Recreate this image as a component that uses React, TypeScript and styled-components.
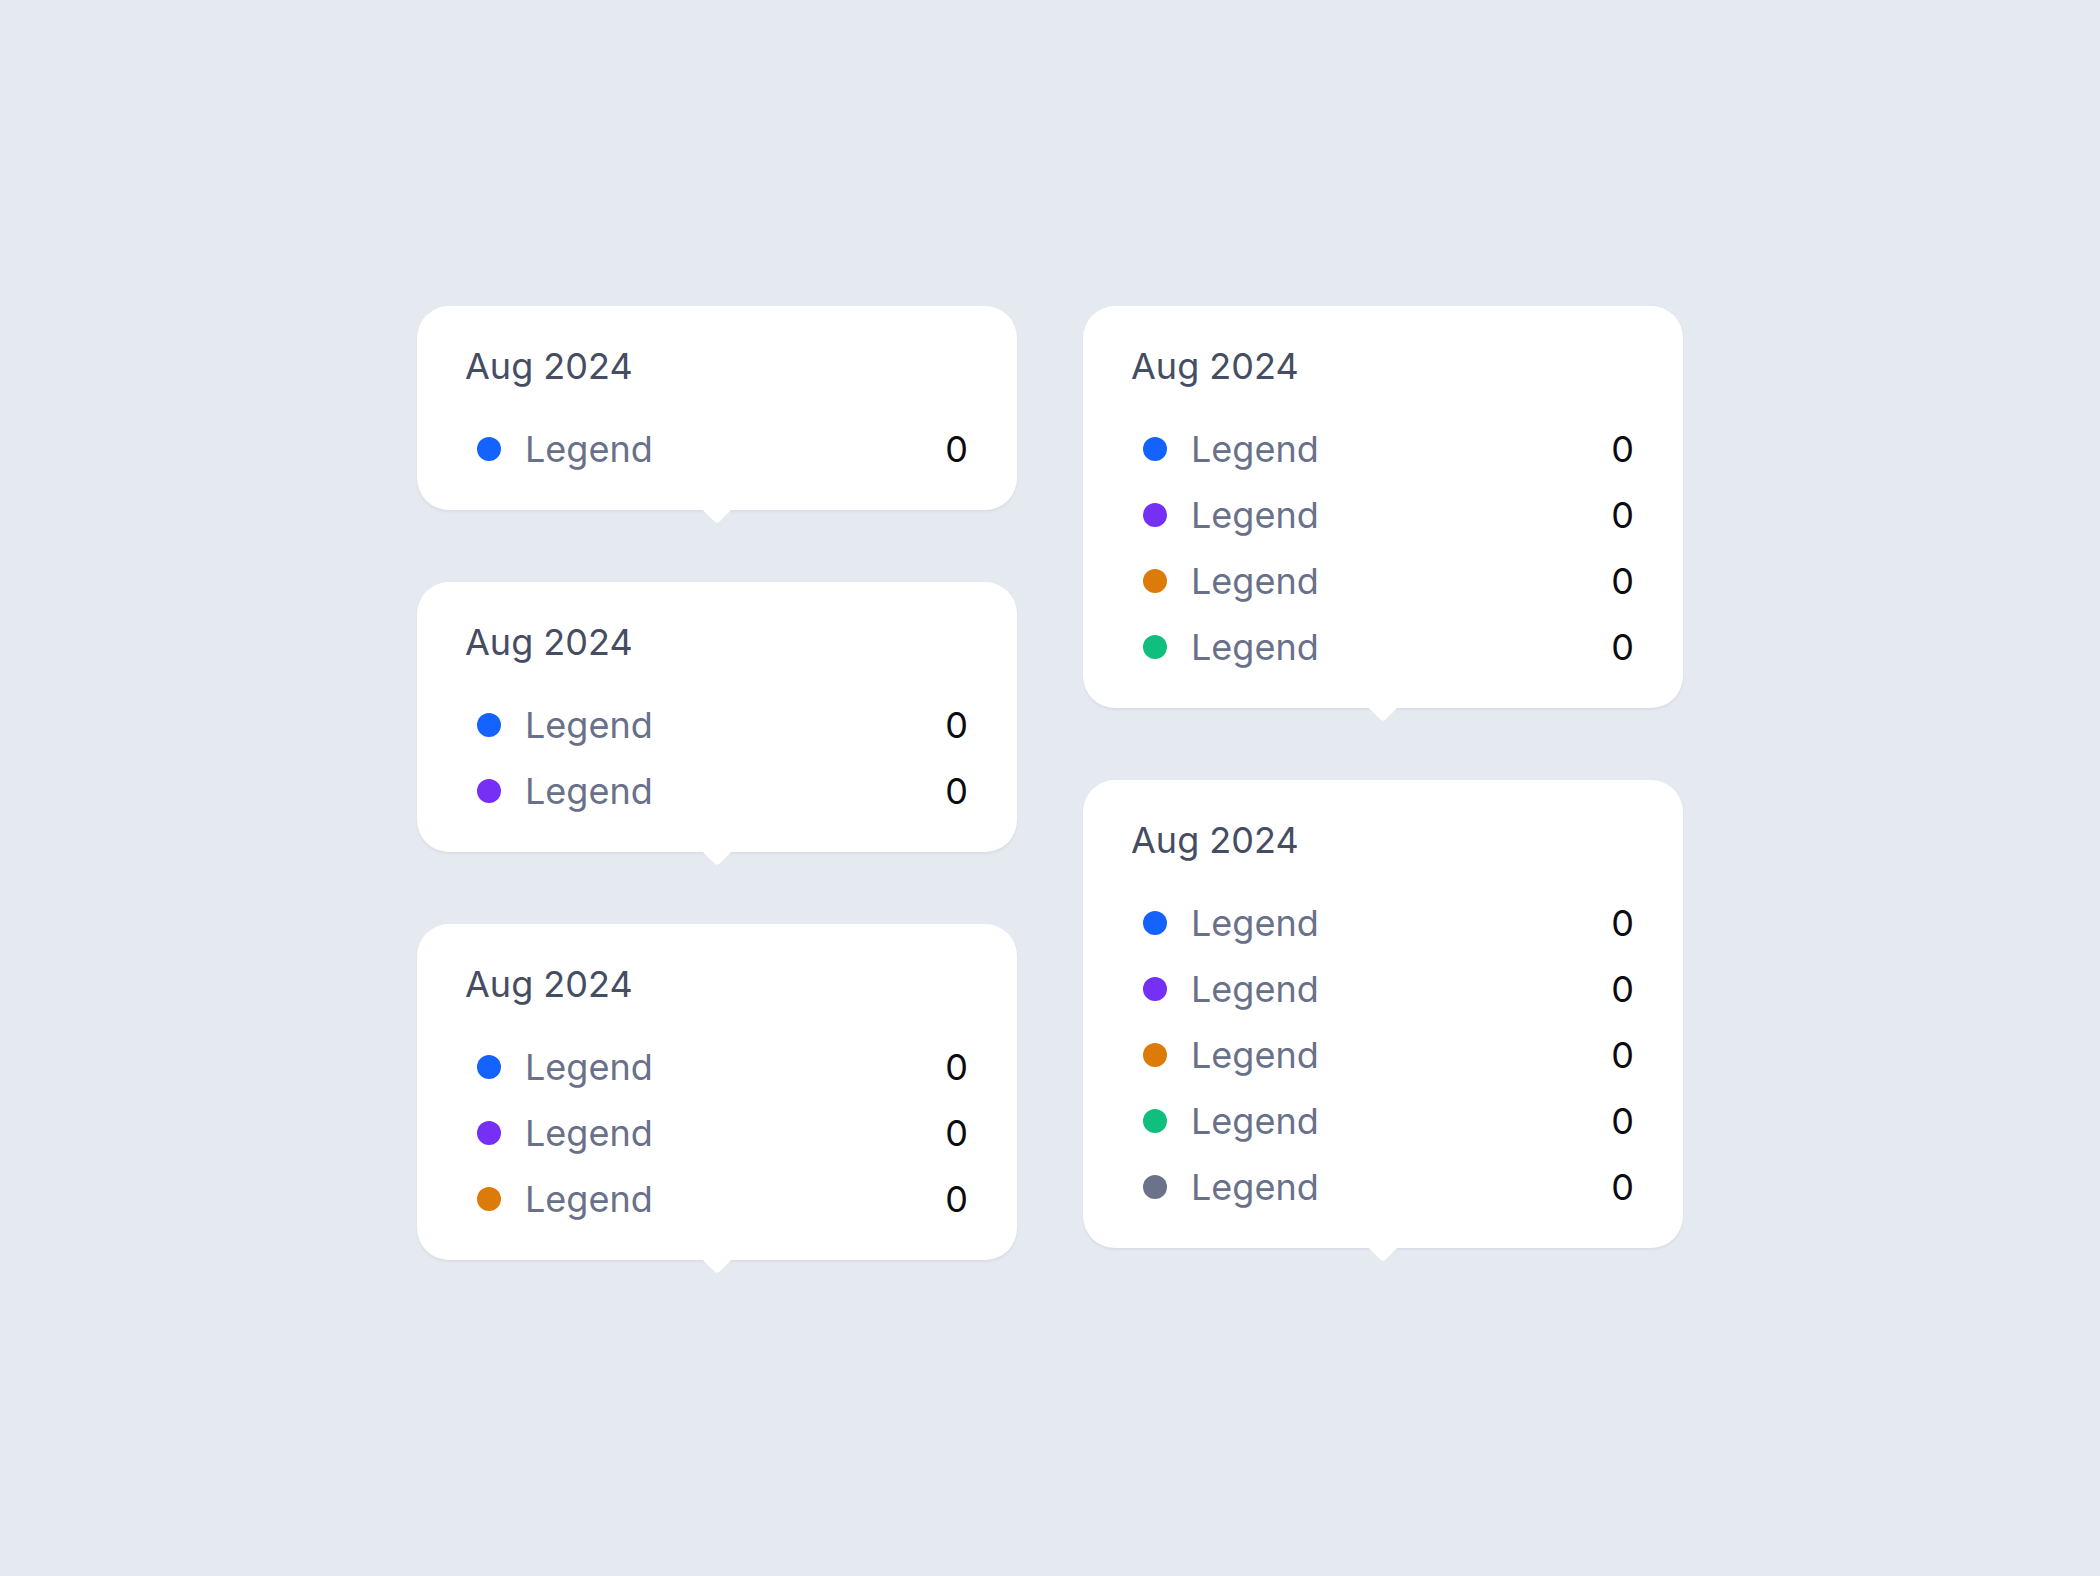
import React from "react";
import styled, { createGlobalStyle } from "styled-components";

const GlobalStyle = createGlobalStyle`
  html, body {
    margin: 0;
    padding: 0;
    background: #e5e9f0;
  }
  body {
    font-family: Inter, "Noto Sans", "Liberation Sans", sans-serif;
    -webkit-font-smoothing: antialiased;
  }
`;

const Page = styled.main`
  box-sizing: border-box;
  min-height: 1576px;
  display: flex;
  align-items: center;
  justify-content: center;
  padding-bottom: 11px;
`;

const Columns = styled.div`
  display: flex;
  align-items: flex-start;
  gap: 66px;
`;

const Column = styled.div`
  display: flex;
  flex-direction: column;
  gap: 72px;
`;

const Tooltip = styled.div`
  position: relative;
  box-sizing: border-box;
  width: 600px;
  padding: 38px 48px 39px 48px;
  background: #ffffff;
  border-radius: 32px;
  box-shadow: 0 2px 3px rgba(15, 23, 42, 0.05);
  display: flex;
  flex-direction: column;
  gap: 39px;

  &::after {
    content: "";
    position: absolute;
    left: 50%;
    bottom: 0;
    width: 20px;
    height: 20px;
    background: #ffffff;
    border-bottom-right-radius: 4px;
    transform: translate(-50%, 50%) rotate(45deg);
  }
`;

const Title = styled.div`
  font-size: 36px;
  line-height: 44px;
  font-weight: 400;
  color: #454d62;
`;

const List = styled.div`
  display: flex;
  flex-direction: column;
  gap: 22px;
`;

const Row = styled.div`
  display: flex;
  align-items: center;
  height: 44px;
  padding-left: 12px;
`;

const Dot = styled.span<{ $color: string }>`
  width: 24px;
  height: 24px;
  border-radius: 50%;
  background: ${(p) => p.$color};
  flex-shrink: 0;
`;

const Label = styled.span`
  margin-left: 24px;
  font-size: 36px;
  line-height: 44px;
  color: #697089;
  flex: 1;
`;

const Value = styled.span`
  font-size: 36px;
  line-height: 44px;
  color: #0c0c10;
  padding-right: 1px;
`;

const COLORS = ["#1463ff", "#752ff5", "#dc7a0a", "#10bf7e", "#6b7289"];

const ChartTooltip: React.FC<{ count: number }> = ({ count }) => (
  <Tooltip>
    <Title>Aug 2024</Title>
    <List>
      {COLORS.slice(0, count).map((c, i) => (
        <Row key={i}>
          <Dot $color={c} />
          <Label>Legend</Label>
          <Value>0</Value>
        </Row>
      ))}
    </List>
  </Tooltip>
);

export default function App() {
  return (
    <>
      <GlobalStyle />
      <Page>
        <Columns>
          <Column>
            <ChartTooltip count={1} />
            <ChartTooltip count={2} />
            <ChartTooltip count={3} />
          </Column>
          <Column>
            <ChartTooltip count={4} />
            <ChartTooltip count={5} />
          </Column>
        </Columns>
      </Page>
    </>
  );
}
